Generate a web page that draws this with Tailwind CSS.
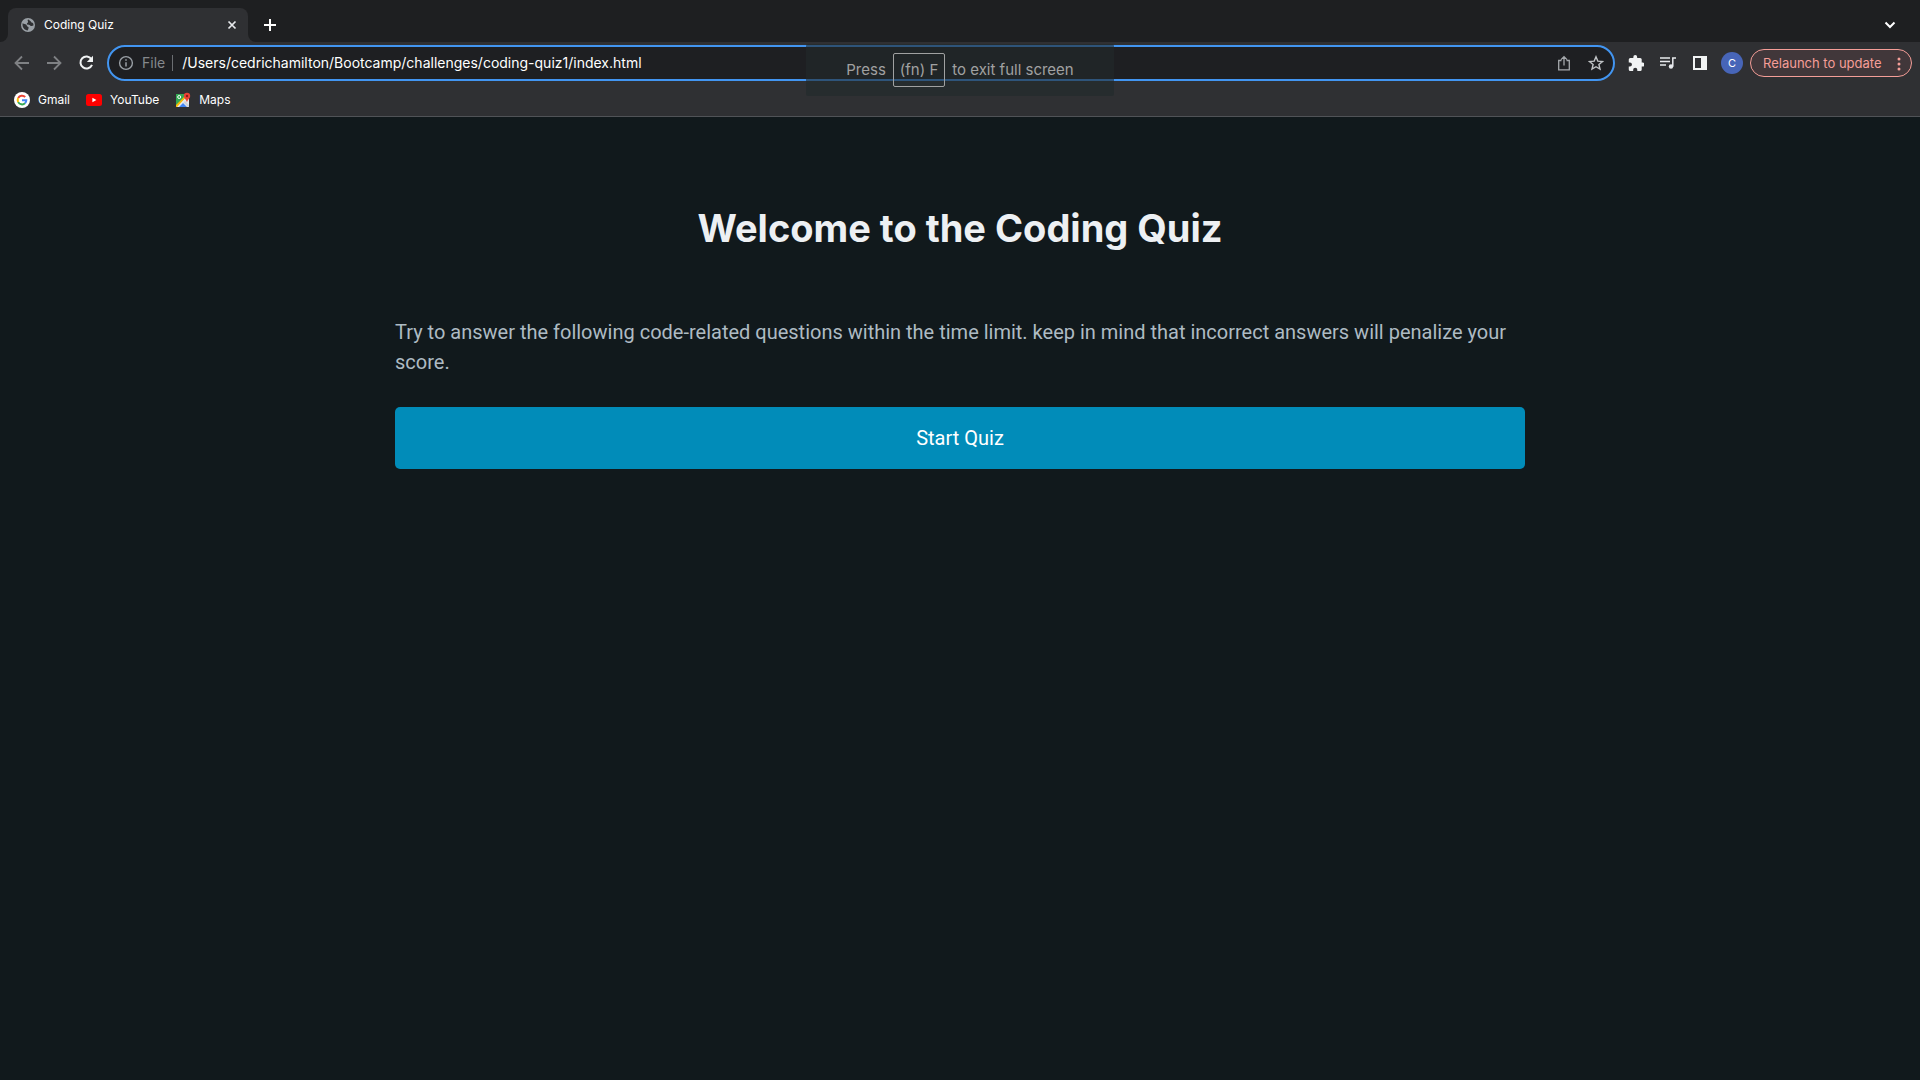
<!DOCTYPE html>
<html lang="en">
<head>
<meta charset="utf-8">
<meta name="viewport" content="width=device-width, initial-scale=1">
<title>Coding Quiz</title>
<script src="https://cdn.jsdelivr.net/npm/@tailwindcss/browser@4"></script>
</head>
<body class="flex min-h-screen flex-col bg-[#11191c] font-['Inter',sans-serif]">
<header class="relative border-b border-[#505357] bg-[#2f3033] text-white">
  <!-- Tab strip -->
  <div class="flex h-[42px] items-end bg-[#1e1f21] pr-[22px]">
    <div class="flex w-2 self-stretch items-end bg-[#2f3033]"><div class="h-full w-full rounded-br-lg bg-[#1e1f21]"></div></div>
    <div class="flex h-[34px] w-60 items-center rounded-t-lg bg-[#2f3033] pl-3 pr-2">
      <svg class="size-4 shrink-0" viewBox="0 0 16 16"><circle cx="8" cy="8" r="7" fill="#9aa0a6"/><path d="M2.6 6.2C4 7.4 5.2 6.8 6.2 7.6c1 .8.2 1.800 1.600 2.200 1 .3.9 1.100.5 2.200l-.6 1.500C4.500 13 2 10.500 2.600 6.200zM8 2.500c-1 1.200.4 1.700 0 2.700-.3.900-1.300.7-1.100 1.700.2.900 1.700.5 2.600 1 .8.500 1.200 1.200 2.200 1 .8-.1 1.400-.6 1.800-.4.2-2.400-.9-3.200-1.800-3.100-.9.100-.6-1.300-1.500-1.500C9.300 3.700 9.500 2.600 8 2.500z" fill="#2f3033"/></svg>
      <span class="ml-2 grow text-xs">Coding Quiz</span>
      <button aria-label="Close tab" class="grid size-4 place-items-center"><svg class="size-4" viewBox="0 0 16 16" fill="none" stroke="#e8eaed" stroke-width="1.700"><path d="M4.500 4.500l7 7m0-7l-7 7"/></svg></button>
    </div>
    <div class="flex w-2 self-stretch items-end bg-[#2f3033]"><div class="h-full w-full rounded-bl-lg bg-[#1e1f21]"></div></div>
    <button aria-label="New tab" class="mb-[9px] ml-1.5 grid size-4 place-items-center"><svg class="size-4" viewBox="0 0 16 16" stroke="#fff" stroke-width="2"><path d="M8 2v12M2 8h12"/></svg></button>
    <button aria-label="Search tabs" class="mb-[9px] ml-auto grid size-4 place-items-center"><svg class="size-4" viewBox="0 0 16 16" fill="none" stroke="#fff" stroke-width="2"><path d="M3.500 5.500L8 10l4.500-4.500"/></svg></button>
  </div>
  <!-- Toolbar -->
  <div class="flex h-[42px] items-center pl-3 pr-2">
    <div class="flex items-center gap-3">
      <button aria-label="Back"><svg class="block size-5" viewBox="0 0 20 20" fill="none" stroke="#7f8184" stroke-width="1.800"><path d="M17 10H4m6-6.500L3.500 10l6.500 6.500"/></svg></button>
      <button aria-label="Forward"><svg class="block size-5" viewBox="0 0 20 20" fill="none" stroke="#7f8184" stroke-width="1.800"><path d="M3 10h13m-6-6.500l6.500 6.500-6.500 6.500"/></svg></button>
      <button aria-label="Reload"><svg class="block size-5" viewBox="0 0 20 20"><path d="M15.400 6A6 6 0 1 0 16 11.800" fill="none" stroke="#f1f3f4" stroke-width="2"/><path d="M17 2.800V9h-6.200z" fill="#f1f3f4"/></svg></button>
    </div>
    <div class="ml-[11px] flex h-9 min-w-0 grow items-center rounded-full border-2 border-[#4295f1] bg-[#1e1f22] pl-[9px] pr-[9px] text-sm">
      <svg class="size-4 shrink-0" viewBox="0 0 16 16" fill="none" stroke="#9aa0a6"><circle cx="8" cy="8" r="6.400" stroke-width="1.400"/><path d="M8 7.200v4.200M8 4.300v1.500" stroke-width="1.500"/></svg>
      <span class="ml-2 text-[#85888c]">File</span>
      <span class="ml-[7px] h-4 w-px bg-[#6b6e72]"></span>
      <input aria-label="Address" class="ml-[9px] min-w-0 grow bg-transparent outline-none" value="/Users/cedrichamilton/Bootcamp/challenges/coding-quiz1/index.html">
      <button aria-label="Share"><svg class="block size-4" viewBox="0 0 16 16" fill="none" stroke="#a5a8ac" stroke-width="1.300"><path d="M5.500 5.500H2.700v9.300h10.600V5.500h-2.800M8 10.500V1.800M5 4.600l3-3 3 3"/></svg></button>
      <button aria-label="Bookmark this page" class="ml-4"><svg class="block size-4" viewBox="0 0 16 16" fill="none" stroke="#c0c3c6" stroke-width="1.400"><path d="M8 1.800l1.800 4.300 4.700.4-3.600 3 1.100 4.600L8 11.700l-4 2.400 1.100-4.600-3.600-3 4.700-.4z"/></svg></button>
    </div>
    <div class="ml-[13px] flex items-center gap-4">
      <button aria-label="Extensions"><svg class="block size-4" viewBox="1 1 21 21" fill="#f1f3f4"><path d="M20.500 11H19V7a2 2 0 0 0-2-2h-4V3.500a2.500 2.500 0 0 0-5 0V5H4a2 2 0 0 0-2 2v3.800h1.500a2.700 2.700 0 0 1 0 5.400H2V20a2 2 0 0 0 2 2h3.800v-1.500a2.700 2.700 0 0 1 5.400 0V22H17a2 2 0 0 0 2-2v-4h1.500a2.500 2.500 0 0 0 0-5z"/></svg></button>
      <button aria-label="Media controls"><svg class="block size-4" viewBox="0 0 16 16" fill="none" stroke="#e8eaed" stroke-width="1.500"><path d="M0 3h10M0 6.500h10M0 10h6M16 3h-3.200v8.500"/><circle cx="11" cy="11.500" r="2.200" fill="#e8eaed" stroke="none"/></svg></button>
      <button aria-label="Side panel"><svg class="block size-4" viewBox="0 0 16 16"><path d="M1 1h14v14H1zm2 2v10h6V3z" fill="#f1f3f4" fill-rule="evenodd"/></svg></button>
    </div>
    <button aria-label="Profile" class="ml-[13px] grid size-[22px] place-items-center rounded-full bg-[#4765b8] text-[11px]">C</button>
    <button class="ml-[7px] flex h-7 w-[162px] shrink-0 items-center justify-between whitespace-nowrap rounded-full border border-[#f59e98] bg-[#41373a] pl-3 pr-2.5 pt-px text-[13px] text-[#f59e98]">Relaunch to update
      <svg class="h-4 w-1" viewBox="0 0 4 16" fill="#f59e98"><circle cx="2" cy="3" r="1.500"/><circle cx="2" cy="8" r="1.500"/><circle cx="2" cy="13" r="1.500"/></svg>
    </button>
  </div>
  <!-- Bookmarks -->
  <nav aria-label="Bookmarks" class="flex h-8 items-center gap-4 pl-3.5 text-xs">
    <a href="#" class="flex items-center gap-2"><svg class="size-4" viewBox="0 0 16 16" fill="none" stroke-width="2"><circle cx="8" cy="8" r="8" fill="#fff"/><path d="M4.200 5.900A4.400 4.400 0 0 1 11.200 5" stroke="#ea4335"/><path d="M4.200 10.100a4.400 4.400 0 0 1 0-4.200" stroke="#fbbc05"/><path d="M11 11.300a4.400 4.400 0 0 1-6.800-1.200" stroke="#34a853"/><path d="M8 8.200h4.300a4.400 4.400 0 0 1-1.300 3.100" stroke="#4285f4"/></svg>Gmail</a>
    <a href="#" class="flex items-center gap-2"><svg class="size-4" viewBox="0 0 16 16"><rect y="2" width="16" height="12" rx="2.500" fill="#f00"/><path d="M6.400 5.700v4.600l4-2.300z" fill="#fff"/></svg>YouTube</a>
    <a href="#" class="flex items-center gap-2"><svg class="size-4" viewBox="0 0 16 16"><path d="M1 2h13v13H1z" fill="#34a853"/><path d="M1 15L13 3h1v12z" fill="#e8eaed"/><path d="M4 15l4-4 4 4z" fill="#4285f4"/><path d="M1 15v-2L12 2h2L2 15z" fill="#fbbc05"/><path d="M10 9l4 4v2h-1L8.500 10.500z" fill="#cfd3d8"/><circle cx="4.200" cy="5" r="1.500" fill="none" stroke="#fff"/><path d="M12 10.500C11.500 7.500 8.800 6.500 8.800 4a3.200 3.200 0 0 1 6.400 0c0 2.500-2.700 3.500-3.200 6.500z" fill="#ea4335"/><circle cx="12" cy="4" r="1.200" fill="#8c1d18"/></svg>Maps</a>
  </nav>
  <!-- Full-screen hint -->
  <div role="status" class="absolute left-1/2 top-11 flex h-[52px] w-[308px] -translate-x-1/2 items-center justify-center gap-[7px] whitespace-nowrap rounded-xs bg-[#22292b]/60 text-[15px] text-[#a0a1a1]">
    <span>Press</span><kbd class="flex h-[34px] items-center rounded-xs border border-[#a0a1a1] px-1.5 font-['Inter',sans-serif] text-[15px]">(fn) F</kbd><span>to exit full screen</span>
  </div>
</header>
<main class="mx-auto w-full max-w-[1130px] pt-[81px]">
  <h1 class="text-center text-[38px] font-bold leading-[60px] text-[#edf0f3]">Welcome to the Coding Quiz</h1>
  <p class="mt-[59px] font-['Roboto',sans-serif] text-xl leading-[30px] text-[#aebbc3]">Try to answer the following code-related questions within the time limit. keep in mind that incorrect answers will penalize your score.</p>
  <button class="mt-[30px] block h-[62px] w-full rounded-[5px] bg-[#018cb9] font-['Roboto',sans-serif] text-xl text-white">Start Quiz</button>
</main>
</body>
</html>
